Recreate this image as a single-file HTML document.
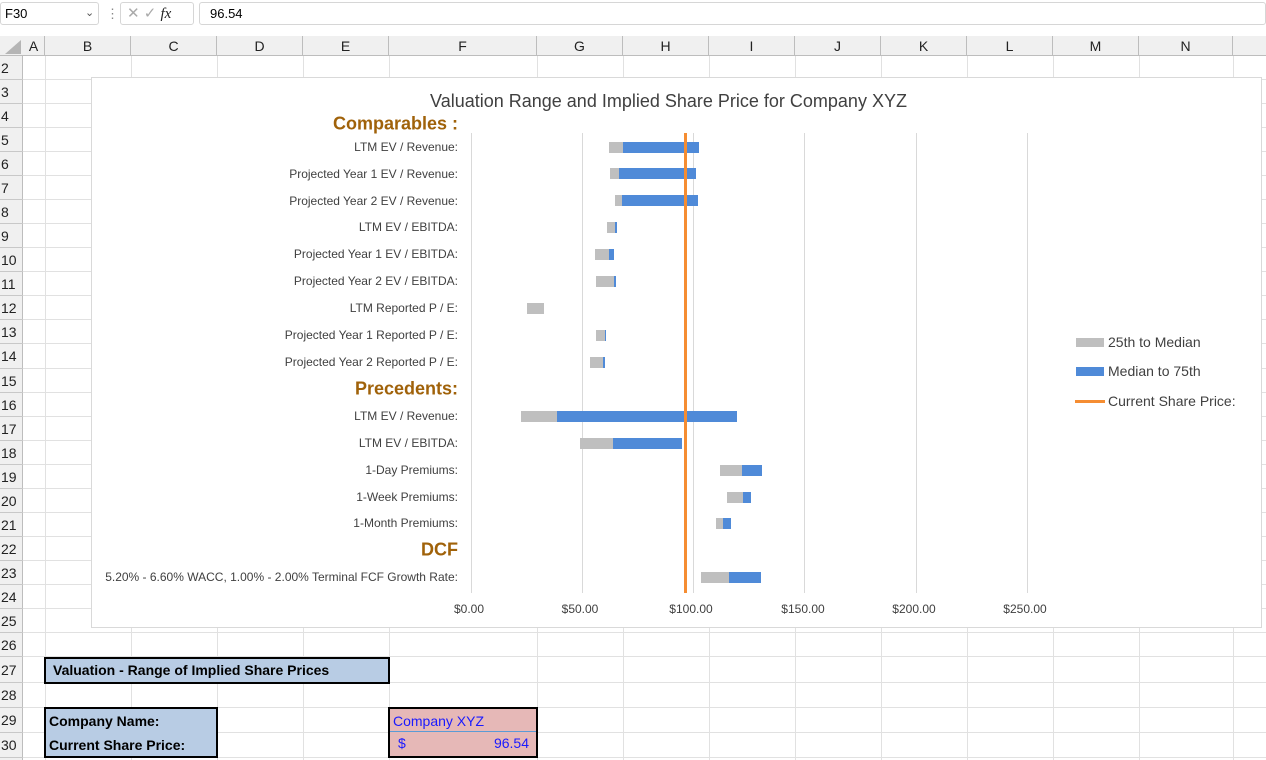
<!DOCTYPE html>
<html><head><meta charset="utf-8"><style>
*{margin:0;padding:0;box-sizing:border-box}
body{width:1266px;height:760px;overflow:hidden;background:#fff;font-family:"Liberation Sans",sans-serif;position:relative}
.a{position:absolute}
.vl{position:absolute;width:1px;background:#e1e1e1}
.hl{position:absolute;height:1px;background:#e1e1e1}
.ch{position:absolute;top:36px;height:20px;font-size:14px;text-align:center;line-height:20px;color:#222;border-right:1px solid #bdbdbd}
.rh{position:absolute;left:0;width:23px;font-size:14px;color:#222;line-height:24px;padding-left:1px}
.lb{position:absolute;right:808px;font-size:12px;color:#404040;white-space:nowrap;transform:translateY(-50%)}
.hd{position:absolute;right:808px;font-size:18px;font-weight:bold;color:#a0620a;white-space:nowrap;transform:translateY(-50%)}
.g{position:absolute;background:#bfbfbf;height:11px}
.b{position:absolute;background:#4f8ad8;height:11px}
.gr{position:absolute;top:133px;height:460px;width:1px;background:#d9d9d9}
.ax{position:absolute;top:602px;font-size:12px;color:#404040;transform:translateX(-50%)}
</style></head><body>
<!-- formula bar -->
<div class="a" style="left:0;top:0;width:1266px;height:30px;background:#fff"></div>
<div class="a" style="left:0;top:2px;width:99px;height:23px;border:1px solid #d6d6d6;border-radius:3px;font-size:13px;line-height:21px;padding-left:4px">F30<span style="position:absolute;left:84px;font-size:11px;color:#555">&#8964;</span></div>
<div class="a" style="left:106px;top:6px;font-size:13px;color:#888">&#8942;</div>
<div class="a" style="left:120px;top:2px;width:74px;height:23px;border:1px solid #d6d6d6;border-radius:3px;font-size:15px;line-height:21px;color:#aaa;padding-left:6px">&#10005; &#10003; <i style="color:#222;font-family:'Liberation Serif',serif">fx</i></div>
<div class="a" style="left:199px;top:2px;width:1067px;height:23px;border:1px solid #d6d6d6;border-radius:3px;font-size:13px;line-height:21px;padding-left:10px">96.54</div>
<!-- headers -->
<div class="a" style="left:0;top:36px;width:1266px;height:20px;background:#f0f0f0;border-bottom:1px solid #bdbdbd"></div>
<div class="a" style="left:0;top:56px;width:23px;height:704px;background:#f0f0f0;border-right:1px solid #bdbdbd"></div>
<div class="a" style="left:5px;top:40px;width:0;height:0;border-left:16px solid transparent;border-bottom:14px solid #b5b5b5"></div>
<div class="ch" style="left:23px;width:22px">A</div>
<div class="ch" style="left:45px;width:86px">B</div>
<div class="ch" style="left:131px;width:86px">C</div>
<div class="ch" style="left:217px;width:86px">D</div>
<div class="ch" style="left:303px;width:86px">E</div>
<div class="ch" style="left:389px;width:148px">F</div>
<div class="ch" style="left:537px;width:86px">G</div>
<div class="ch" style="left:623px;width:86px">H</div>
<div class="ch" style="left:709px;width:86px">I</div>
<div class="ch" style="left:795px;width:86px">J</div>
<div class="ch" style="left:881px;width:86px">K</div>
<div class="ch" style="left:967px;width:86px">L</div>
<div class="ch" style="left:1053px;width:86px">M</div>
<div class="ch" style="left:1139px;width:94px">N</div>
<!-- grid verticals -->
<div class="vl" style="left:45px;top:56px;height:704px"></div>
<div class="vl" style="left:131px;top:56px;height:704px"></div>
<div class="vl" style="left:217px;top:56px;height:704px"></div>
<div class="vl" style="left:303px;top:56px;height:704px"></div>
<div class="vl" style="left:389px;top:56px;height:704px"></div>
<div class="vl" style="left:537px;top:56px;height:704px"></div>
<div class="vl" style="left:623px;top:56px;height:704px"></div>
<div class="vl" style="left:709px;top:56px;height:704px"></div>
<div class="vl" style="left:795px;top:56px;height:704px"></div>
<div class="vl" style="left:881px;top:56px;height:704px"></div>
<div class="vl" style="left:967px;top:56px;height:704px"></div>
<div class="vl" style="left:1053px;top:56px;height:704px"></div>
<div class="vl" style="left:1139px;top:56px;height:704px"></div>
<div class="vl" style="left:1233px;top:56px;height:704px"></div>
<!-- row lines & numbers -->
<div id="rows"></div>
<script>
var tops=[];for(var n=2;n<=26;n++)tops.push(56+(n-2)*24.04);
tops.push(657,683,708,733);
var h='';for(var i=0;i<tops.length;i++){var t=tops[i],nx=(i+1<tops.length?tops[i+1]:758);
h+='<div class="hl" style="left:23px;width:1243px;top:'+(nx-1)+'px"></div>';
h+='<div class="hl" style="left:0;width:23px;top:'+(nx-1)+'px;background:#c8c8c8"></div>';
h+='<div class="rh" style="top:'+t+'px;height:'+(nx-t)+'px;line-height:'+(nx-t)+'px">'+(i+2)+'</div>';}
document.getElementById('rows').innerHTML=h;
</script>
<!-- chart -->
<div class="a" style="left:91px;top:77px;width:1171px;height:551px;background:#fff;border:1px solid #d9d9d9"></div>
<div class="a" style="left:91px;width:1171px;top:91px;text-align:center;font-size:18px;color:#404040;padding-right:16px">Valuation Range and Implied Share Price for Company XYZ</div>
<div class="gr" style="left:471px"></div>
<div class="gr" style="left:582px"></div>
<div class="gr" style="left:693px"></div>
<div class="gr" style="left:804px"></div>
<div class="gr" style="left:916px"></div>
<div class="gr" style="left:1027px"></div>
<div class="ax" style="left:469px">$0.00</div>
<div class="ax" style="left:580px">$50.00</div>
<div class="ax" style="left:691px">$100.00</div>
<div class="ax" style="left:803px">$150.00</div>
<div class="ax" style="left:914px">$200.00</div>
<div class="ax" style="left:1025px">$250.00</div>
<div class="hd" style="top:124px">Comparables :</div>
<div class="lb" style="top:147px">LTM EV / Revenue:</div>
<div class="lb" style="top:174px">Projected Year 1 EV / Revenue:</div>
<div class="lb" style="top:201px">Projected Year 2 EV / Revenue:</div>
<div class="lb" style="top:227px">LTM EV / EBITDA:</div>
<div class="lb" style="top:254px">Projected Year 1 EV / EBITDA:</div>
<div class="lb" style="top:281px">Projected Year 2 EV / EBITDA:</div>
<div class="lb" style="top:308px">LTM Reported P / E:</div>
<div class="lb" style="top:335px">Projected Year 1 Reported P / E:</div>
<div class="lb" style="top:362px">Projected Year 2 Reported P / E:</div>
<div class="hd" style="top:389px">Precedents:</div>
<div class="lb" style="top:416px">LTM EV / Revenue:</div>
<div class="lb" style="top:443px">LTM EV / EBITDA:</div>
<div class="lb" style="top:470px">1-Day Premiums:</div>
<div class="lb" style="top:497px">1-Week Premiums:</div>
<div class="lb" style="top:523px">1-Month Premiums:</div>
<div class="hd" style="top:550px">DCF</div>
<div class="lb" style="top:577px">5.20% - 6.60% WACC, 1.00% - 2.00% Terminal FCF Growth Rate:</div>
<!-- bars -->
<div class="g" style="left:609px;width:14px;top:142px"></div><div class="b" style="left:623px;width:76px;top:142px"></div>
<div class="g" style="left:610px;width:9px;top:168px"></div><div class="b" style="left:619px;width:77px;top:168px"></div>
<div class="g" style="left:615px;width:7px;top:195px"></div><div class="b" style="left:622px;width:76px;top:195px"></div>
<div class="g" style="left:607px;width:8px;top:222px"></div><div class="b" style="left:615px;width:2px;top:222px"></div>
<div class="g" style="left:595px;width:14px;top:249px"></div><div class="b" style="left:609px;width:5px;top:249px"></div>
<div class="g" style="left:596px;width:18px;top:276px"></div><div class="b" style="left:614px;width:2px;top:276px"></div>
<div class="g" style="left:527px;width:17px;top:303px"></div>
<div class="g" style="left:596px;width:9px;top:330px"></div><div class="b" style="left:605px;width:1px;top:330px"></div>
<div class="g" style="left:590px;width:13px;top:357px"></div><div class="b" style="left:603px;width:2px;top:357px"></div>
<div class="g" style="left:521px;width:36px;top:411px"></div><div class="b" style="left:557px;width:180px;top:411px"></div>
<div class="g" style="left:580px;width:33px;top:438px"></div><div class="b" style="left:613px;width:69px;top:438px"></div>
<div class="g" style="left:720px;width:22px;top:465px"></div><div class="b" style="left:742px;width:20px;top:465px"></div>
<div class="g" style="left:727px;width:16px;top:492px"></div><div class="b" style="left:743px;width:8px;top:492px"></div>
<div class="g" style="left:716px;width:7px;top:518px"></div><div class="b" style="left:723px;width:8px;top:518px"></div>
<div class="g" style="left:701px;width:28px;top:572px"></div><div class="b" style="left:729px;width:32px;top:572px"></div>
<div class="a" style="left:684px;top:133px;width:3px;height:460px;background:#f58d32"></div>
<!-- legend -->
<div class="a" style="left:1076px;top:338px;width:28px;height:9px;background:#bfbfbf"></div>
<div class="a" style="left:1108px;top:334px;font-size:14px;color:#404040">25th to Median</div>
<div class="a" style="left:1076px;top:367px;width:28px;height:9px;background:#4f8ad8"></div>
<div class="a" style="left:1108px;top:363px;font-size:14px;color:#404040">Median to 75th</div>
<div class="a" style="left:1075px;top:400px;width:30px;height:3px;background:#f58d32"></div>
<div class="a" style="left:1108px;top:393px;font-size:14px;color:#404040">Current Share Price:</div>
<!-- boxes -->
<div class="a" style="left:44px;top:657px;width:346px;height:27px;background:#b8cce4;border:2px solid #000;font-size:14px;font-weight:bold;line-height:23px;padding-left:7px">Valuation - Range of Implied Share Prices</div>
<div class="a" style="left:44px;top:707px;width:174px;height:51px;background:#b8cce4;border:2px solid #000;font-size:14px;font-weight:bold;line-height:24px;padding-left:3px">Company Name:<br>Current Share Price:</div>
<div class="a" style="left:388px;top:707px;width:150px;height:51px;background:#e6b8b7;border:2px solid #000"></div>
<div class="a" style="left:390px;top:709px;width:146px;height:23px;border-bottom:1px solid #5b9bd5;font-size:14px;color:#1a1aff;line-height:24px;padding-left:3px">Company XYZ</div>
<div class="a" style="left:398px;top:735px;font-size:14px;color:#1a1aff">$</div>
<div class="a" style="left:390px;top:735px;width:139px;text-align:right;font-size:14px;color:#1a1aff">96.54</div>
</body></html>
